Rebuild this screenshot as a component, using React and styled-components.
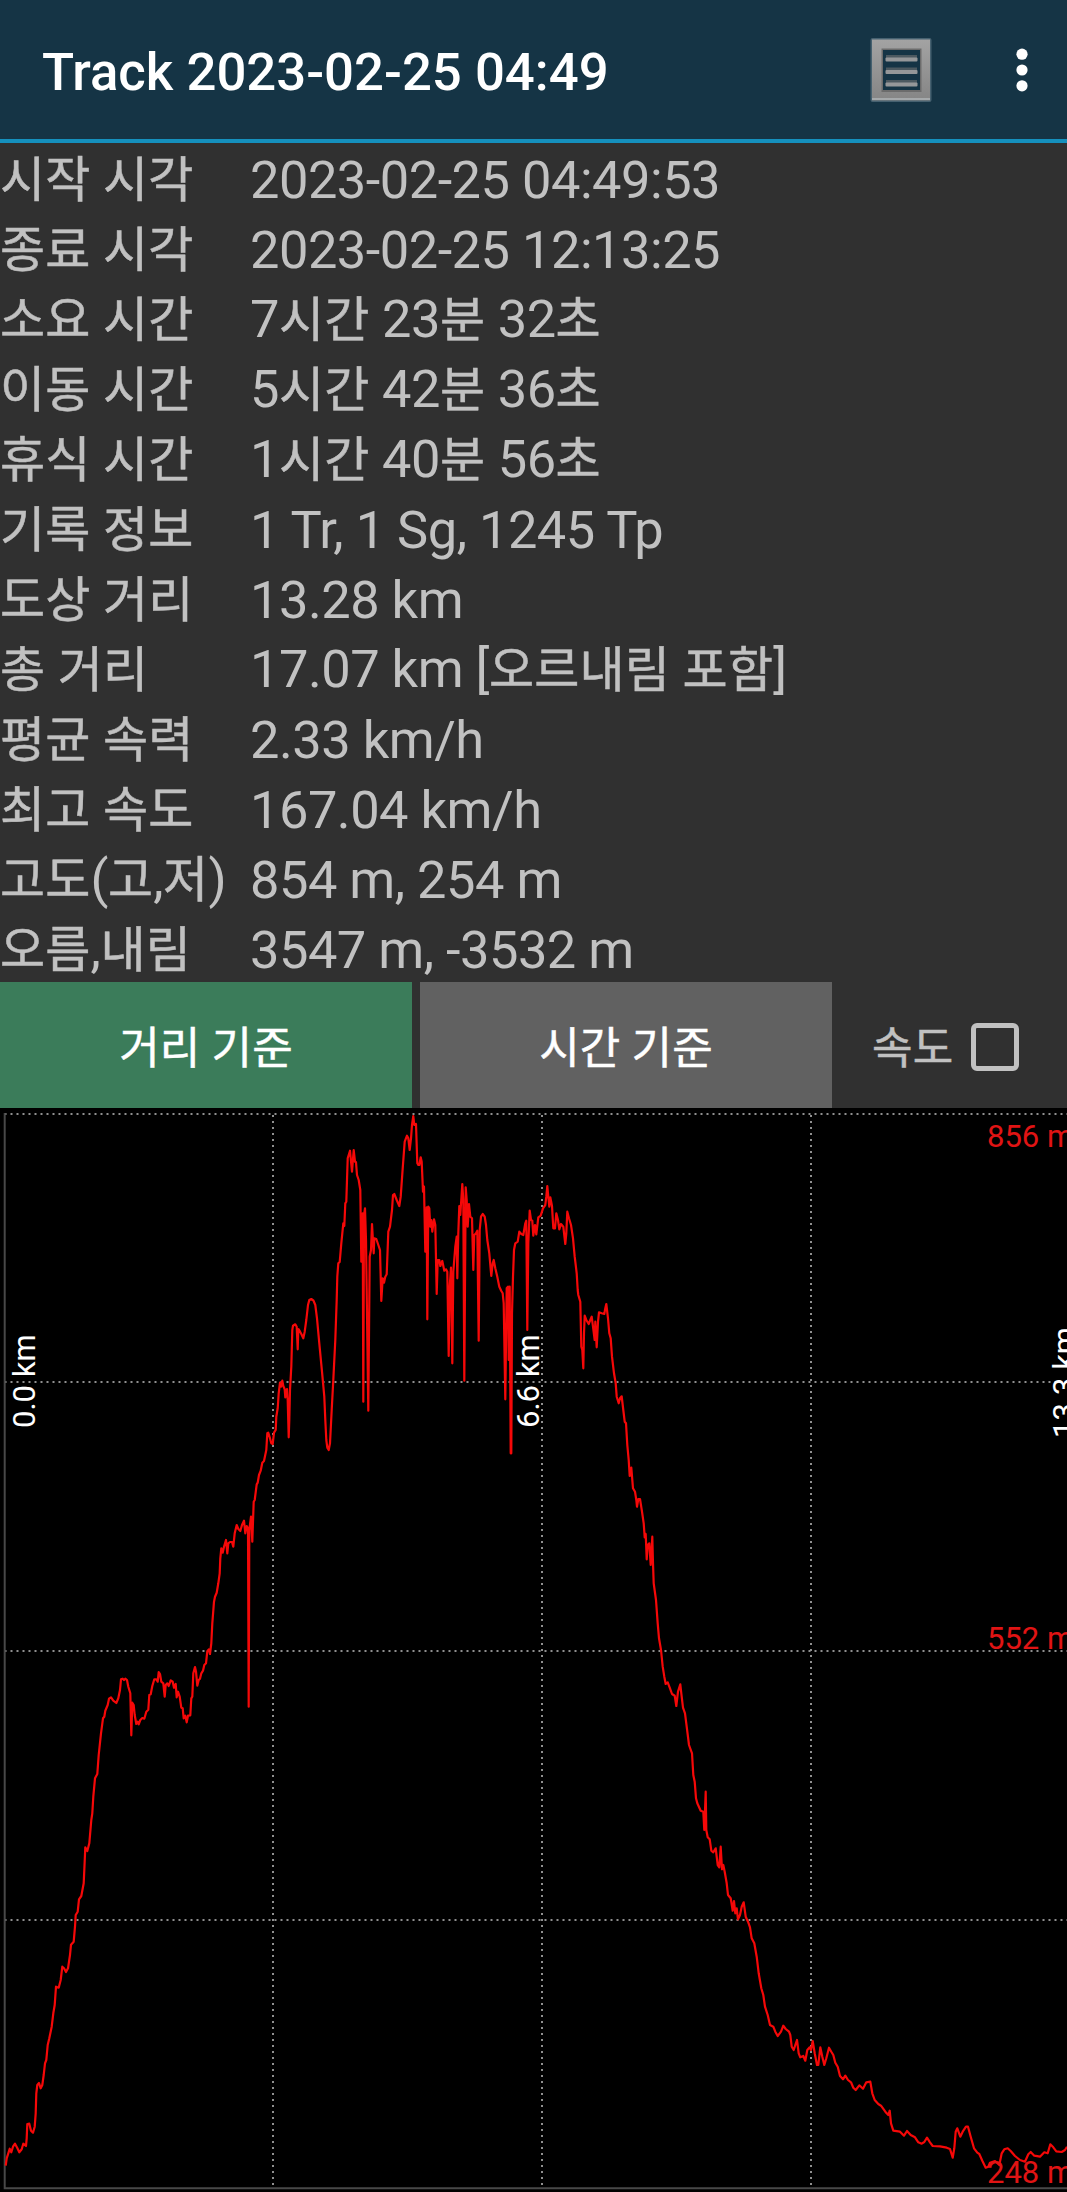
import React, { useState } from "react"
import styled, { createGlobalStyle } from "styled-components"

const GlobalStyle = createGlobalStyle`
  body {
    margin: 0;
    background-color: #000;
    overflow: hidden;
  }
`

const Container = styled.div`
  display: flex;
  flex-direction: column;
  width: 1067px;
  height: 2192px;
  overflow: hidden;
  background-color: #303030;
  color: #c1c1c1;
  font-family: Roboto, "Noto Sans CJK KR", sans-serif;
`

const Toolbar = styled.header`
  display: flex;
  align-items: center;
  box-sizing: border-box;
  height: 143px;
  padding: 0 39px 0 42px;
  background-color: #153445;
  border-bottom: 4px solid #1590bd;
`

const Title = styled.h1`
  flex: 1;
  margin: 0;
  padding-top: 5px;
  color: #fff;
  font-size: 52.7px;
  font-weight: 500;
  line-height: 1;
  white-space: nowrap;
`

const IconButton = styled.button`
  display: flex;
  padding: 0;
  border: none;
  background: none;
  margin-left: ${({ $gap }) => $gap || 0}px;
`

const Stats = styled.dl`
  box-sizing: border-box;
  margin: 0;
  padding-top: 2px;
  height: 839px;
`

const Row = styled.div`
  display: flex;
  height: 70px;
  align-items: center;
  font-size: 52.4px;
  letter-spacing: -0.5px;
  line-height: 70px;
  white-space: pre;
`

const Label = styled.dt`
  width: 250px;
`

const Value = styled.dd`
  margin: 0;
`

const Hangul = styled.span`
  font-size: ${({ $size }) => $size || 49}px;
  letter-spacing: 0.2px;
  -webkit-text-stroke: 0.5px currentColor;
`

const Controls = styled.div`
  display: flex;
  height: 126px;
`

const ModeButton = styled.button`
  width: 412px;
  margin-right: 8px;
  padding: 0;
  border: none;
  background-color: ${({ $active }) => ($active ? "#3b7c5a" : "#616161")};
  color: #fff;
  font-family: inherit;
  font-size: 44px;
`

const SpeedToggle = styled.label`
  display: flex;
  align-items: center;
  gap: 18px;
  padding-left: 32px;
  font-size: 44px;
`

const CheckMark = styled.span`
  box-sizing: border-box;
  width: 48px;
  height: 48px;
  margin-top: 4px;
  border: 5px solid #c1c1c1;
  border-radius: 6px;
  background-color: ${({ $checked }) => ($checked ? "#c1c1c1" : "transparent")};
`

const HiddenInput = styled.input`
  display: none;
`

const Chart = styled.svg`
  display: block;
  background-color: #000;
  font-family: Roboto, sans-serif;
`

const stats = [
  ["시작 시각", "2023-02-25 04:49:53"],
  ["종료 시각", "2023-02-25 12:13:25"],
  ["소요 시간", "7시간 23분 32초"],
  ["이동 시간", "5시간 42분 36초"],
  ["휴식 시간", "1시간 40분 56초"],
  ["기록 정보", "1 Tr, 1 Sg, 1245 Tp"],
  ["도상 거리", "13.28 km"],
  ["총 거리", "17.07 km [오르내림 포함]"],
  ["평균 속력", "2.33 km/h"],
  ["최고 속도", "167.04 km/h"],
  ["고도(고,저)", "854 m, 254 m"],
  ["오름,내림", "3547 m, -3532 m"],
]

// track sections: origin in chart pixels, points in thirds of a pixel
const sections = [
  {
    x: 0,
    y: 712,
    points:
      "17,1037 20,1015 25,1000 29,986 34,997 39,980 45,971 52,984 58,997 65,988 70,971 78,978 80,955 82,912 88,911 93,932 99,938 104,920 107,880 109,820 112,795 117,789 122,805 127,795 131,765 135,730 139,720 143,675 148,655 155,620 160,580 164,555 168,500 176,503 182,480 187,440 192,445 198,456 204,445 210,405 213,374 221,365 225,320 227,285 233,275 237,238 244,228 251,190 253,150 256,82 262,93 268,70 274,0",
  },
  {
    x: 0,
    y: 342,
    points:
      "277,1090 280,1040 285,985 292,972 296,915 303,850 309,805 313,800 316,782 323,765 327,746 333,742 340,752 349,759 355,745 360,720 363,688 368,686 372,690 376,686 381,690 385,710 391,730 394,856 397,758 401,765 404,795 409,822 413,815 416,823 421,810 427,804 433,806 439,785 445,779 448,735 452,733 457,708 463,688 469,688 473,695 476,666 480,672 484,695 490,700 494,740 497,705 502,700 506,708 512,691 518,695 522,713 527,702 530,742 534,725 539,740 544,773 548,775 551,805 556,797 560,817 564,797 571,796 574,745 577,740 580,670 585,651 588,665 592,707 596,690 600,686 604,670 609,662 613,645 618,640 622,604 627,598 630,612 634,580 637,520 642,455 645,440 650,428 655,400 659,370 661,325 664,295 668,308 672,290 678,270 682,310 685,280 690,276 696,276 700,290 704,250 710,225 715,237 721,243 726,225 732,212 736,250 740,228 744,235 746,770 748,240 753,200 757,275 761,155 764,150 770,103 773,98 777,75 782,62 787,38 792,33 799,0",
  },
  {
    x: 200,
    y: -8,
    points:
      "202,1000 205,998 209,1012 214,1030 218,1032 222,998 227,990 229,950 233,925 236,880 240,848 243,860 247,842 250,858 254,868 256,892 261,867 263,900 266,1012 268,960 270,870 274,800 277,690 279,677 286,673 290,680 293,748 295,687 299,693 304,702 310,715 314,695 319,660 324,615 328,600 334,597 340,601 346,615 351,655 358,730 366,815 373,890 376,960 379,1020 382,1043 386,1050 390,1030 395,930 400,840 406,720 410,600 412,530 415,490 419,486 424,430 430,370 433,378 436,310 439,305 441,240 443,175 450,152 456,215 461,150 465,185 468,187 471,225 476,240 481,270 484,485 488,340 490,905 492,345 495,325 498,420 505,932 509,470 513,450 516,372 521,460 523,415 529,417 534,432 540,450 544,603 548,535 552,548 556,530 560,523 565,395 570,380 576,330 579,285 583,282 590,300 598,318 602,290 608,205 614,125 621,107 625,115 629,150 633,115 636,75 640,48 643,75 648,72 652,190 655,195 658,195 662,172 665,185 669,275 672,260 676,455 680,322",
  },
  {
    x: 280,
    y: -8,
    points:
      "440,325 442,658 445,320 448,325 451,380 454,360 457,395 462,358 466,375 470,582 473,480 478,480 481,498 487,483 493,512 498,508 502,515 506,768 509,560 513,503 517,790 520,515 526,440 530,410 532,535 535,400 538,318 541,345 547,252 550,300 553,842 557,262 560,300 563,380 567,312 571,350 576,355 580,510 583,405 588,400 592,392 596,722 599,390 603,350 608,342 614,350 618,375 622,420 628,460 634,528 638,490 641,480 646,505 652,530 658,560 664,573 668,580 671,610 676,898 680,565 684,560 686,780 689,560 692,1060 694,1060 696,640 699,530 702,450 706,430 713,425 718,395 724,402 730,405 736,370 739,362 742,690 745,430 749,332 753,360 757,362 760,407 765,375 769,403 775,352 782,347 789,325 796,315 799,290 802,258 805,290 808,320 811,292 816,318 820,385 825,385 829,340 834,360 838,388 843,372 850,380 856,432 859,400 862,335 867,355 873,375 879,415 884,470 890,520 893,570",
  },
  {
    x: 420,
    y: -8,
    points:
      "475,585 481,605 484,740 487,750 490,805 492,700 494,647 499,660 506,672 511,660 515,650 519,680 524,720 526,665 530,742 534,665 537,637 545,640 553,642 556,625 559,612 564,655 568,700 572,715 576,770 582,820 587,850 590,890 596,910 600,895 605,889 610,930 614,965 618,970 622,1035 626,1080 629,1128 634,1103 639,1165 645,1175 649,1200",
  },
  {
    x: 560,
    y: 342,
    points:
      "231,170 235,147 240,147 246,185 251,220 254,262 257,252 260,328 263,285 268,280 272,345 277,260 279,340 281,400 288,450 293,520 297,565 303,600 308,650 313,680 317,702 323,697 330,715 336,732 344,737 349,768 354,725 361,703 364,730 369,773 375,790 380,830 387,885 396,910 400,975 404,995 408,1045 412,1060 422,1082 430,1085 433,1140 437,1025 439,1140 443,1162 449,1168 453,1195",
  },
  {
    x: 700,
    y: 712,
    points:
      "34,92 40,97 47,85 53,135 58,142 62,80 66,148 70,135 74,155 80,190 84,225 92,235 98,272 102,243 106,280 110,265 114,298 120,285 125,260 131,247 137,290 144,305 150,322 155,355 163,370 170,410 176,460 184,505 190,525 195,560 203,585 210,615 220,620 226,635 233,648 243,635 250,617 257,627 267,635 271,645 275,680 281,690 286,675 291,660 296,700 301,712 310,708 316,722 322,690 329,682 333,690 338,663 344,700 351,735 355,735 361,682 367,710 373,735 379,715 387,683 394,695 400,705 406,728 413,740 420,768 429,778 436,767 444,780 453,787 460,803 467,810 478,796 489,806 499,787 511,785 517,820 524,840 535,852 543,857 556,875 565,885 569,872 573,910 580,932 600,935 612,947 621,933 632,945 645,952 655,967 665,971 673,966 681,953 690,967 698,978 720,979 740,983 750,987 758,1013 763,985 767,935 772,925 781,950 788,935 798,920 804,920 812,950 822,985 832,998 838,1002 847,1022 857,1043 865,1040 870,1028 885,1023 898,1035 905,1000 913,988 923,985 932,993 945,1008 960,1020 975,1025 985,1003 992,996 1003,1007 1020,1010 1033,997 1043,1000 1051,973 1060,982 1069,994 1085,996 1095,990 1101,980",
  },
]

const track = sections
  .flatMap(({ x, y, points }) =>
    points.split(" ").map((point) => {
      const [px, py] = point.split(",").map(Number)
      return `${(x + px / 3).toFixed(1)},${(y + py / 3).toFixed(1)}`
    })
  )
  .join(" ")

const gridRows = [6, 274, 543, 812]
const gridColumns = [273, 542, 811]

// hangul runs are set a little smaller than the latin text around them
const MixedText = ({ text, size }) =>
  text.split(/([가-힣]+)/).map((part, i) =>
    i % 2 ? (
      <Hangul key={i} $size={size}>
        {part}
      </Hangul>
    ) : (
      part
    )
  )

const DetailsIcon = () => (
  <svg width="66" height="70" viewBox="0 0 66 70">
    <defs>
      <linearGradient id="frame" x1="0" y1="0" x2="0" y2="1">
        <stop offset="0" stopColor="#a3a3a3" />
        <stop offset="1" stopColor="#858585" />
      </linearGradient>
    </defs>
    <rect x="2.5" y="3" width="61" height="64" rx="2" fill="#466170" />
    <rect x="4" y="4.5" width="58" height="61" fill="url(#frame)" />
    <rect x="4" y="63" width="58" height="2" fill="#a5a9ab" />
    <rect x="13.5" y="13.5" width="40" height="43.5" fill="#6c6c6c" />
    <rect x="15" y="15" width="37" height="40" fill="#153445" />
    {[20, 32.5, 45].map((y) => (
      <g key={y}>
        <rect x="18" y={y} width="31" height="3" fill="#4c5960" />
        <rect x="17.5" y={y + 2.5} width="32" height="4" rx="1" fill="#959799" />
      </g>
    ))}
  </svg>
)

const MoreIcon = () => (
  <svg width="12" height="44" viewBox="0 0 12 44" fill="#fff">
    <circle cx="6" cy="6.2" r="5.6" />
    <circle cx="6" cy="22" r="5.6" />
    <circle cx="6" cy="37.8" r="5.6" />
  </svg>
)

const ElevationChart = () => (
  <Chart width="1067" height="1084" viewBox="0 0 1067 1084">
    <g stroke="#8f8f8f" strokeWidth="2" strokeDasharray="2 4">
      {gridRows.map((y) => (
        <line key={y} x1="4.5" x2="1067" y1={y} y2={y} />
      ))}
      {gridColumns.map((x) => (
        <line key={x} x1={x} x2={x} y1="7" y2="1078" />
      ))}
    </g>
    <path d="M4.7 5V1080.3H1067" fill="none" stroke="#484848" strokeWidth="2" />
    <polyline
      points={track}
      fill="none"
      stroke="#f50808"
      strokeWidth="2.2"
      strokeLinejoin="round"
    />
    <g fill="#e01414" fontSize="31">
      <text x="987" y="39">856 m</text>
      <text x="987" y="541">552 m</text>
      <text x="987" y="1075">248 m</text>
    </g>
    <g fill="#fff" fontSize="31">
      <text transform="translate(35 320) rotate(-90)">0.0 km</text>
      <text transform="translate(539 320) rotate(-90)">6.6 km</text>
      <text transform="translate(1075 330) rotate(-90)">13.3 km</text>
    </g>
  </Chart>
)

const App = () => {
  const [mode, setMode] = useState("distance")
  const [showSpeed, setShowSpeed] = useState(false)
  return (
    <Container>
      <GlobalStyle />
      <Toolbar>
        <Title>Track 2023-02-25 04:49</Title>
        <IconButton>
          <DetailsIcon />
        </IconButton>
        <IconButton $gap={82}>
          <MoreIcon />
        </IconButton>
      </Toolbar>
      <Stats>
        {stats.map(([label, value]) => (
          <Row key={label}>
            <Label>
              <MixedText text={label} />
            </Label>
            <Value>
              <MixedText text={value} />
            </Value>
          </Row>
        ))}
      </Stats>
      <Controls>
        <ModeButton $active={mode === "distance"} onClick={() => setMode("distance")}>
          <MixedText text="거리 기준" size={44} />
        </ModeButton>
        <ModeButton $active={mode === "time"} onClick={() => setMode("time")}>
          <MixedText text="시간 기준" size={44} />
        </ModeButton>
        <SpeedToggle>
          <span>
            <MixedText text="속도" size={44} />
          </span>
          <HiddenInput
            type="checkbox"
            checked={showSpeed}
            onChange={(e) => setShowSpeed(e.target.checked)}
          />
          <CheckMark $checked={showSpeed} />
        </SpeedToggle>
      </Controls>
      <ElevationChart />
    </Container>
  )
}

export default App
